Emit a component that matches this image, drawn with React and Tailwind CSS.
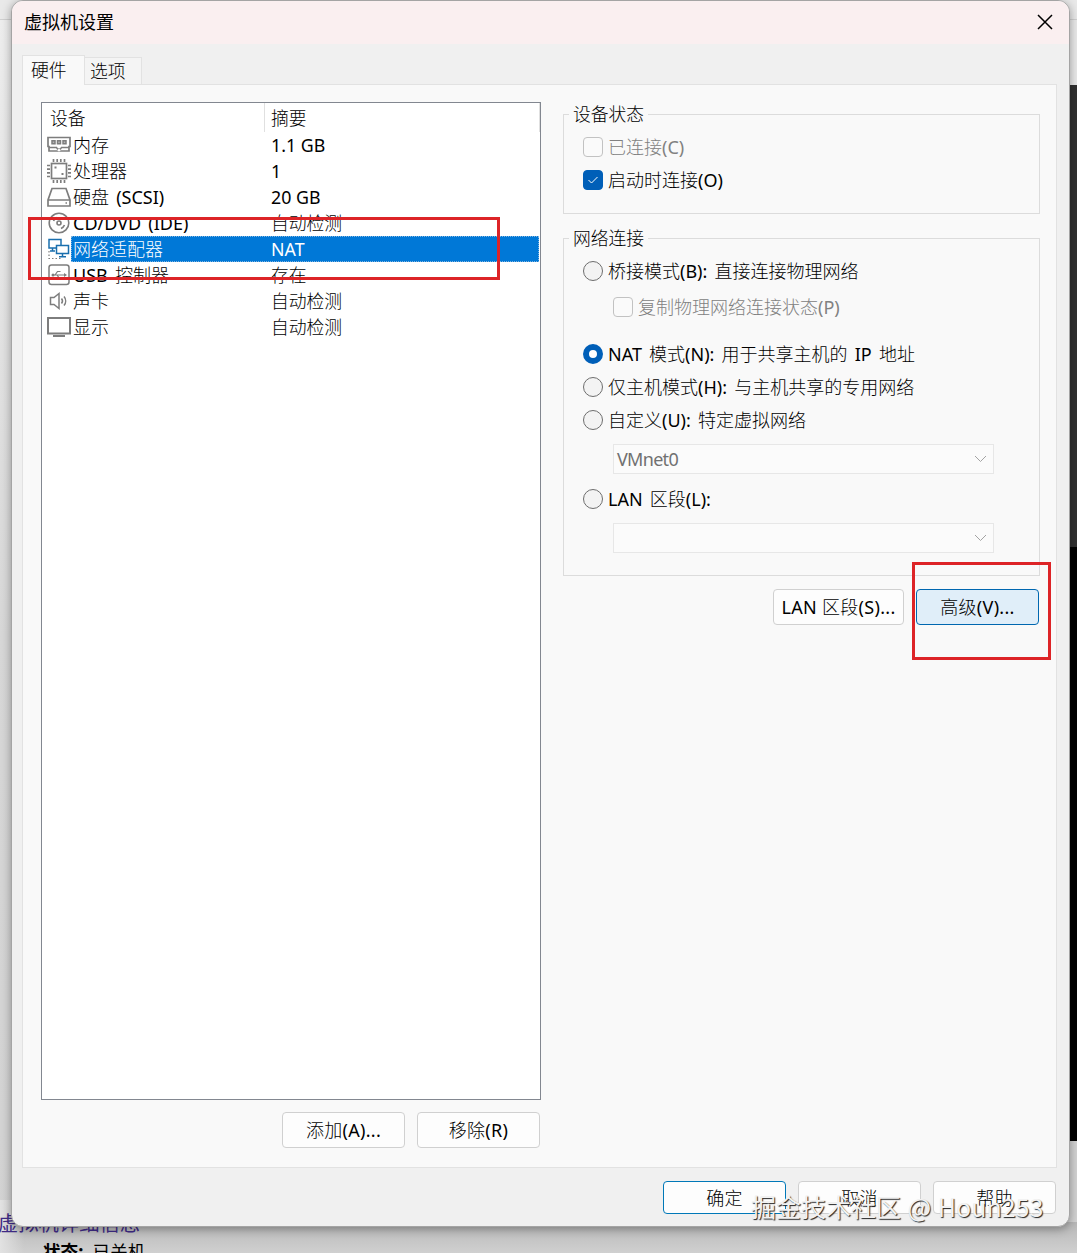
import React from 'react'

const GRAY = '#7d7d7d'

const MemoryIcon = () => (
  <svg width="24" height="26" viewBox="0 0 24 26" fill="none" stroke={GRAY}>
    <path d="M1 5.500h22v9h-1v4.500H2v-4.500H1z" strokeWidth="1.700" />
    <path d="M2 15.500h7.500l1 1.500h3l1-1.500H22" strokeWidth="1.400" />
    <path d="M11 19l1-1.500 1 1.500" stroke="white" strokeWidth="1.500" />
    <path d="M5 8.800h3v3H5zM10.500 8.800h3v3h-3zM16 8.800h3v3h-3z" fill="#b5b5b5" strokeWidth="1.500" />
  </svg>
)

const CpuIcon = () => (
  <svg width="24" height="26" viewBox="0 0 24 26" fill="none" stroke={GRAY}>
    <rect x="4.500" y="5.500" width="15" height="15" strokeWidth="1.700" />
    <path d="M6.500 1v3M10.200 1v3M13.800 1v3M17.500 1v3M6.500 22v3M10.200 22v3M13.800 22v3M17.500 22v3M0 7.500h3M0 11.200h3M0 14.800h3M0 18.500h3M21 7.500h3M21 11.200h3M21 14.800h3M21 18.500h3" strokeWidth="1.700" />
    <path d="M7.500 9.500h2M14.500 16h2" strokeWidth="2" />
  </svg>
)

const DiskIcon = () => (
  <svg width="24" height="26" viewBox="0 0 24 26" fill="none" stroke={GRAY} strokeWidth="1.700">
    <path d="M5 4.500h14l4 11.500v6H1v-6zM1 16h22" />
    <path d="M18.500 19h1.500" strokeWidth="1.500" />
  </svg>
)

const DiscIcon = () => (
  <svg width="24" height="26" viewBox="0 0 24 26" fill="none" stroke={GRAY} strokeWidth="1.600">
    <circle cx="12" cy="13" r="9.800" />
    <circle cx="12" cy="13" r="2" />
    <path d="M6.500 11A6 6 0 0 1 10 7.500M17.500 15a6 6 0 0 1-3.500 3.500" />
  </svg>
)

const NetworkIcon = () => (
  <svg width="24" height="26" viewBox="0 0 24 26" fill="none" stroke="#1a6fae" strokeWidth="1.500">
    <path d="M9 12H2V3.500h12V9" />
    <path d="M9.500 9.500h12v8h-12zM15.500 17.500v3M12 20.800h7M5.500 12v3M3 15h5" />
    <path d="M2 15v7.500h13" stroke={GRAY} strokeWidth="1.200" strokeDasharray="1.500 2" />
  </svg>
)

const UsbIcon = () => (
  <svg width="24" height="26" viewBox="0 0 24 26" fill="none" stroke={GRAY} strokeWidth="1.500">
    <rect x="2" y="3" width="20" height="19.500" rx="2.500" />
    <path d="M5 13h13M8 13l2.500-3.500h3M10 13l2.500 3.500h3" strokeWidth="1.200" />
    <path d="M17 11l3 2-3 2z" fill={GRAY} strokeWidth="0" />
    <circle cx="6" cy="13" r="1.500" fill={GRAY} strokeWidth="0" />
  </svg>
)

const SoundIcon = () => (
  <svg width="24" height="26" viewBox="0 0 24 26" fill="none" stroke={GRAY} strokeWidth="1.500">
    <path d="M3.500 9.500h3.500L12 5.500v15l-5-4H3.500z" />
    <path d="M14.500 10.500a4 4 0 0 1 0 5M17 8.500a7 7 0 0 1 0 9" />
  </svg>
)

const DisplayIcon = () => (
  <svg width="24" height="26" viewBox="0 0 24 26" fill="none" stroke={GRAY} strokeWidth="2">
    <path d="M1 4h22v15.500H1zM6 22h12" />
  </svg>
)

const devices = [
  { icon: MemoryIcon, name: '内存', summary: '1.1 GB' },
  { icon: CpuIcon, name: '处理器', summary: '1' },
  { icon: DiskIcon, name: '硬盘 (SCSI)', summary: '20 GB' },
  { icon: DiscIcon, name: 'CD/DVD (IDE)', summary: '自动检测' },
  { icon: NetworkIcon, name: '网络适配器', summary: 'NAT', selected: true },
  { icon: UsbIcon, name: 'USB 控制器', summary: '存在' },
  { icon: SoundIcon, name: '声卡', summary: '自动检测' },
  { icon: DisplayIcon, name: '显示', summary: '自动检测' },
]

const DeviceRow = ({ icon: Icon, name, summary, selected }) => (
  <div className="flex h-[26px] items-center pl-[5px]">
    <Icon />
    <div
      className={`flex h-[26px] flex-1 items-center mr-px ${
        selected ? 'bg-[#0078d7] text-white outline outline-1 -outline-offset-1 outline-dotted outline-[#7fb4e0]' : ''
      }`}
    >
      <span className="w-[200px] pl-[2px]">{name}</span>
      <span className="text-[17.8px] [word-spacing:0]">{summary}</span>
    </div>
  </div>
)

const Checkbox = ({ checked, children }) => (
  <div className={`flex h-5 items-center gap-[5px] ${checked ? '' : 'text-[#818181]'}`}>
    <span
      className={`flex size-5 items-center justify-center rounded-[4px] border ${
        checked ? 'border-[#005fb8] bg-[#005fb8]' : 'border-[#c2c2c2] bg-[#fafafa]'
      }`}
    >
      {checked && (
        <svg width="12" height="10" viewBox="0 0 12 10" fill="none" stroke="white">
          <path d="M1.500 5l3 3 6-6" />
        </svg>
      )}
    </span>
    <span>{children}</span>
  </div>
)

const Radio = ({ checked, children }) => (
  <div className="flex h-5 items-center gap-[5px]">
    <span
      className={`size-5 rounded-full ${
        checked ? 'border-[6px] border-[#005fb8] bg-white' : 'border border-[#6e6e6e] bg-[#f3f3f3]'
      }`}
    />
    <span>{children}</span>
  </div>
)

const Select = ({ value }) => (
  <div className="ml-[30px] flex h-[30px] w-[381px] items-center justify-between border border-[#e7e7e7] bg-[#fbfbfb] pl-[3px] pr-[6px] text-[#717171]">
    <span className="tracking-[-0.7px]">{value}</span>
    <svg width="13" height="8" viewBox="0 0 13 8" fill="none" stroke="#a3a3a3">
      <path d="M1 1l5.500 5.500L12 1" />
    </svg>
  </div>
)

const Group = ({ title, className, children }) => (
  <fieldset className={`w-[477px] border border-[#dcdcdc] pl-[19px] ${className}`}>
    <legend className="-ml-[14px] h-[22px] px-1 leading-[22px] text-[17.8px]">{title}</legend>
    {children}
  </fieldset>
)

const Button = ({ className = 'w-[123px] h-9 border-[#d0d0d0] bg-[#fdfdfd]', children }) => (
  <button className={`flex items-center justify-center rounded-[4px] border tracking-[0.3px] ${className}`}>
    {children}
  </button>
)

const Backdrop = () => (
  <div className="absolute inset-0 bg-[#e9e9e9]">
    <div className="absolute inset-x-0 top-[19px] h-px bg-[#d0d0d0]" />
    <div className="absolute left-0 top-5 h-[1233px] w-3 bg-linear-to-b from-[#ededed] via-[#d7d7d7] to-[#d2d2d2]" />
    <div className="absolute left-[1060px] top-[85px] h-[462px] w-[17px] bg-[#303030]" />
    <div className="absolute left-[1060px] top-[547px] h-[594px] w-[17px] bg-black" />
    <div className="absolute left-[1060px] top-[1141px] h-[112px] w-[17px] bg-[#d2d2d2]" />
    <div className="absolute inset-x-0 top-[1222px] h-[31px] bg-linear-to-b from-[#b7b7b7] to-[#d0d0d0]" />
    <div className="absolute left-0 top-[1200px] h-[53px] w-6 bg-linear-to-r from-[#e2e2e2] to-transparent" />
    <p className="absolute -left-[2px] top-[1210px] font-['Noto_Sans_CJK_SC',sans-serif] text-[20.3px] leading-[24px] text-[#3f2b86]">
      虚拟机详细信息
    </p>
    <p className="absolute left-[43px] top-[1239px] font-['Noto_Sans_CJK_SC',sans-serif] text-[17.5px] leading-[24px]">
      <b>状态:</b>
      <span className="ml-[9px]">已关机</span>
    </p>
  </div>
)

export default function App() {
  return (
    <div className="relative h-[1253px] w-[1077px] overflow-hidden whitespace-nowrap font-['Noto_Sans','Noto_Sans_CJK_SC_Light','Noto_Sans_CJK_SC',sans-serif] text-[18px] leading-[26px] text-black [word-spacing:2.500px]">
      <Backdrop />

      <div className="relative ml-[11px] flex h-[1227px] w-[1059px] flex-col overflow-hidden rounded-[12px] border border-[#a4a4a4] bg-[#f0f0f0] shadow-[0_2px_10px_rgba(0,0,0,0.35)]">
        <header className="flex h-[43px] shrink-0 items-center justify-between bg-[#faeff0] pb-[2px] pl-3 pr-4 font-['Noto_Sans_CJK_SC',sans-serif]">
          <h1 className="-mt-[2px] text-[18px]">虚拟机设置</h1>
          <svg width="16" height="16" viewBox="0 0 16 16" fill="none" stroke="black" strokeWidth="1.500">
            <path d="M1 1l14 14M15 1L1 15" />
          </svg>
        </header>

        <nav className="relative z-10 ml-[10px] flex h-10 shrink-0 items-end text-[17.8px]">
          <div className="-mb-px h-[30px] w-[63px] border border-b-0 border-[#e2e2e2] bg-[#f9f9f9] pl-2 leading-[29px]">硬件</div>
          <div className="h-[27px] w-[57px] border border-b-0 border-l-0 border-[#e2e2e2] bg-[#f4f4f4] pl-[5px] leading-[27px]">选项</div>
        </nav>

        <main className="ml-[10px] flex h-[1084px] w-[1035px] shrink-0 border border-[#e2e2e2] bg-[#f9f9f9] pl-[18px]">
          <section className="mt-[17px] flex w-[500px] flex-col">
            <div className="h-[998px] border border-[#828790] bg-white">
              <div className="flex h-[29px] items-center text-[17.8px] leading-[30px]">
                <span className="w-[222px] pl-[8px]">设备</span>
                <span className="h-[29px] flex-1 border-x border-[#e0e0e0] pl-[6px]">摘要</span>
              </div>
              {devices.map((device) => (
                <DeviceRow key={device.name} {...device} />
              ))}
            </div>
            <div className="mt-3 flex justify-end gap-3 pr-px">
              <Button>添加(A)...</Button>
              <Button>移除(R)</Button>
            </div>
          </section>

          <section className="ml-[22px] mt-[18px] w-[477px]">
            <Group title="设备状态" className="h-[111px]">
              <div className="mt-3 flex flex-col gap-[13px]">
                <Checkbox>已连接(C)</Checkbox>
                <Checkbox checked>启动时连接(O)</Checkbox>
              </div>
            </Group>
            <Group title="网络连接" className="mt-[13px] h-[349px]">
              <div className="mt-3">
                <Radio>桥接模式(B): 直接连接物理网络</Radio>
                <div className="ml-[30px] mt-4">
                  <Checkbox>复制物理网络连接状态(P)</Checkbox>
                </div>
                <div className="mt-[27px] flex flex-col gap-[13px]">
                  <Radio checked>NAT 模式(N): 用于共享主机的 IP 地址</Radio>
                  <Radio>仅主机模式(H): 与主机共享的专用网络</Radio>
                  <Radio>自定义(U): 特定虚拟网络</Radio>
                </div>
                <div className="mt-[14px] flex flex-col">
                  <Select value="VMnet0" />
                  <div className="mb-[14px] mt-[15px]">
                    <Radio>LAN 区段(L):</Radio>
                  </div>
                  <Select value="" />
                </div>
              </div>
            </Group>
            <div className="mt-[13px] flex justify-end gap-3 pr-px">
              <Button className="h-9 w-[131px] border-[#d0d0d0] bg-[#fdfdfd]">LAN 区段(S)...</Button>
              <Button className="h-9 w-[123px] border-[#0067b0] bg-[#e0eef9]">高级(V)...</Button>
            </div>
          </section>
        </main>

        <footer className="mr-[13px] mt-[13px] flex justify-end gap-3">
          <Button className="h-[33px] w-[123px] border-[#0078b8] bg-[#fdfdfd]">确定</Button>
          <Button className="h-[33px] w-[123px] border-[#d0d0d0] bg-[#fdfdfd]">取消</Button>
          <Button className="h-[33px] w-[123px] border-[#d0d0d0] bg-[#fdfdfd]">帮助</Button>
        </footer>
      </div>

      {/* red callouts drawn over the dialog */}
      <div className="absolute left-[28px] top-[217px] h-[63px] w-[472px] border-[3px] border-[#dd2427]" />
      <div className="absolute left-[912px] top-[562px] h-[98px] w-[139px] border-[3px] border-[#dd2427]" />

      <p className="absolute left-[751px] top-[1188px] font-['Noto_Sans_CJK_SC',sans-serif] text-[25px] leading-[36px] text-[#f2f2f2] [text-shadow:1px_1px_1px_#222] [word-spacing:1px]">
        掘金技术社区 @ Houn253
      </p>
    </div>
  )
}
